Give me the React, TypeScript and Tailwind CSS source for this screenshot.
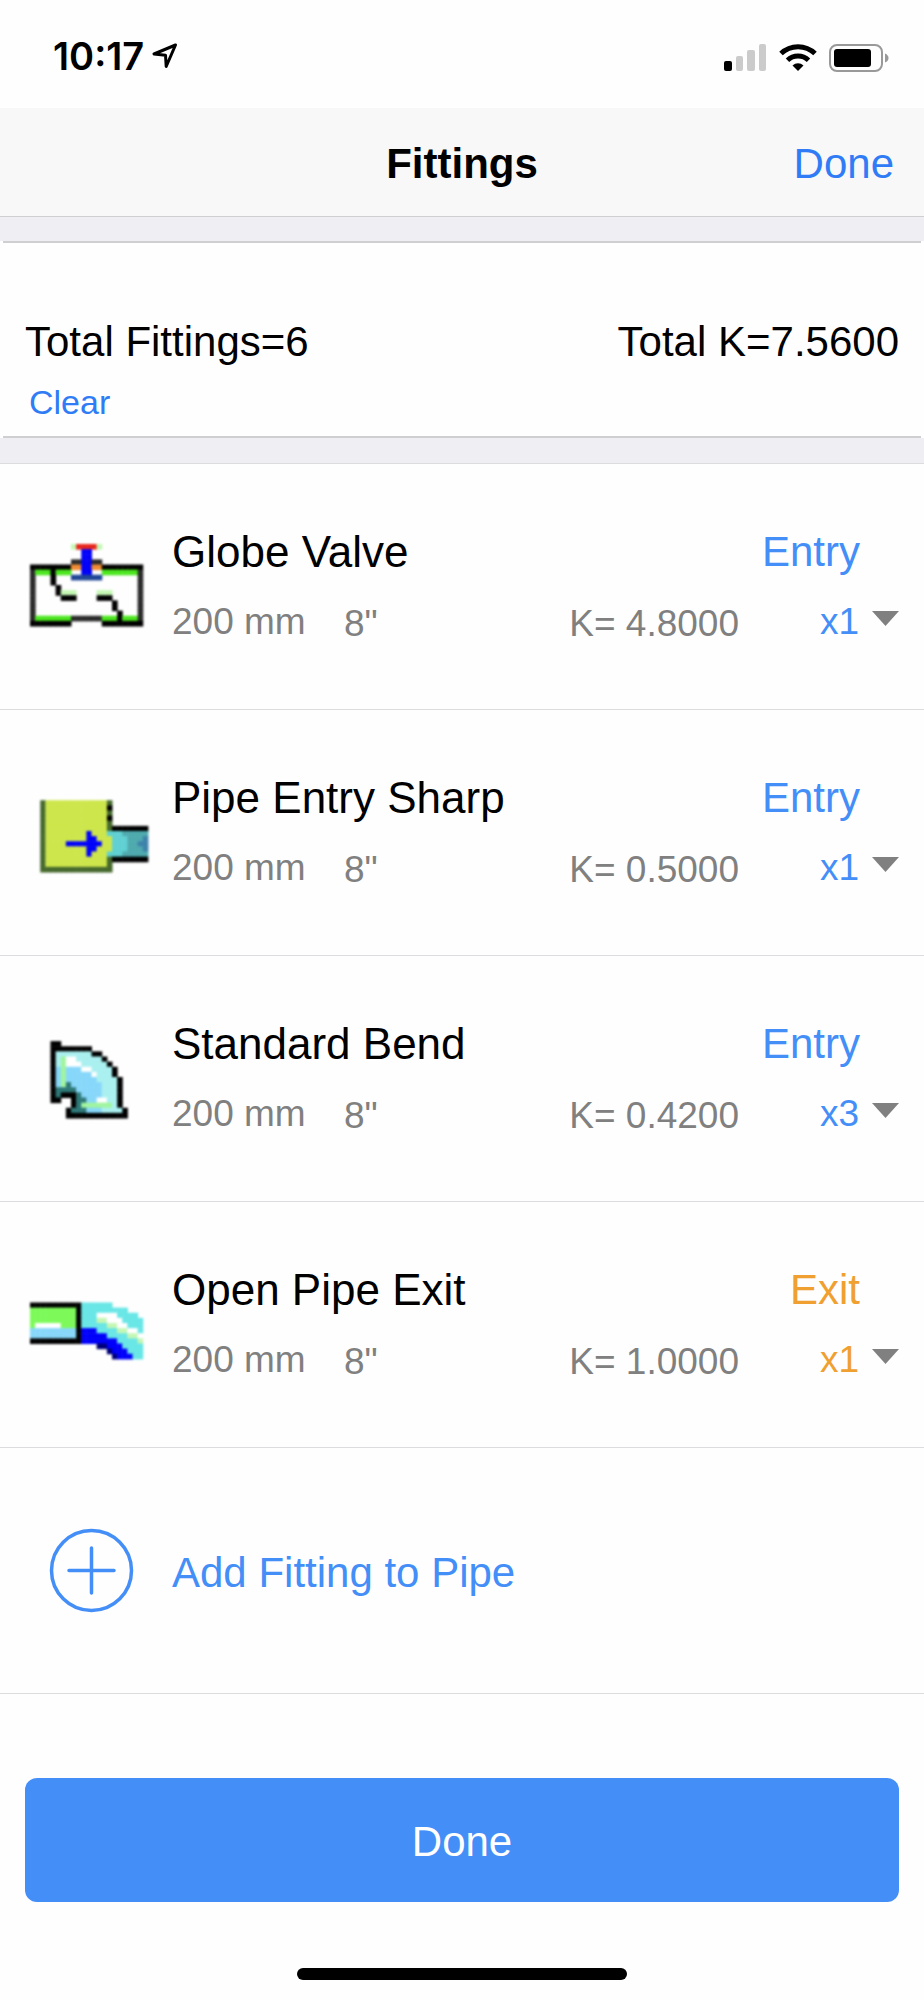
import { FC, useState } from "react";

type Fitting = {
  id: string;
  name: string;
  k: string;
  count: number;
  kind: "Entry" | "Exit";
  bitmap: string[];
};

// one character per pixel, "." is left empty
const palette: Record<string, string> = {
  K: "#000000",
  D: "#2b2b2b",
  R: "#e8251b",
  B: "#0000fa",
  N: "#000078",
  V: "#1f4596",
  O: "#f08c32",
  G: "#4be61e",
  g: "#c4f7b4",
  F: "#7dfa5a",
  f: "#a0f5a0",
  L: "#cde64b",
  M: "#46692d",
  C: "#5fd0d2",
  T: "#4eaaae",
  U: "#3c82aa",
  A: "#aaf0f0",
  S: "#87d7fa",
  E: "#2d7878",
  Q: "#69e6e6",
  W: "#ffffff",
};

const globeValve = [
  "........gRRRRg..........",
  "..........BB............",
  "..........BB............",
  "........DDBBDD..........",
  "KKKKKKKKOOBBOOKKKKKKKK..",
  "DGGGKGGG..BB..GGGGGGGD..",
  "D...K...VVVVVV.......D..",
  "D...K................D..",
  "D....K...............D..",
  "D....Kggg....ggg.....D..",
  "D.....KKK....KKK.....D..",
  "D...............K....D..",
  "D...............K....D..",
  "D................K...D..",
  "DGGGGGGGDDDDDDGGGKGGGD..",
  "KKKKKKKK......KKKKKKKK..",
];

const pipeEntry = [
  "........................",
  "........................",
  "..MLLLLLLLLLLLLM........",
  "..MLLLLLLLLLLLLK........",
  "..MLLLLLLLLLLLLM........",
  "..MLLLLLLLLLLLLK........",
  "..MLLLLLLLLLLLLM........",
  "..MLLLLLLLLLLLLMKKKKKKK.",
  "..MLLLLLLLLBLLLCCCTTTTT.",
  "..MLLLLLLLLBBLLLCCCTTTU.",
  "..MLLLLBBBBBBBLLCCCTTUU.",
  "..MLLLLLLLLBBLLLCCCTTTU.",
  "..MLLLLLLLLBLLLCCCTTTTT.",
  "..MLLLLLLLLLLLLMKKKKKKK.",
  "..MLLLLLLLLLLLLM........",
  "..MMMMMMMMMMMMMM........",
];

const standardBend = [
  "........................",
  "....KK..................",
  "....KKKKKKKK............",
  "....KAAAAAAAKK..........",
  "....KAfWWAAAAAK.........",
  "....KAfWWWAAAAAK........",
  "....KSfSSSWWAAAAK.......",
  "....KSfSSSSSWAAAK.......",
  "....KSfSSSSSSAAAAK......",
  "....KSfESSSSSSAAAK......",
  "....KEEEESSSSSAAAK......",
  "....KEKKKESSSSAAAK......",
  "....KK..KEESSWWAAK......",
  "........KEffffffAK......",
  ".......KEEESSSAAAAK.....",
  ".......KKKKKKKKKKKK.....",
];

const openPipeExit = [
  "........................",
  "........................",
  "........................",
  "........................",
  "KKKKKKKKKKQQQQQQ........",
  "FFFFFFFFFKQQQQQQQQQ.....",
  "FFFFFFFFFKQQQWWWWQQQQ...",
  "FFFFFFFFFKQQQggWWWQQQQ..",
  "FWWWWWFFFKQQQQQggWWQQQ..",
  "SSSSSSSSSKBBBQQQQggWWQ..",
  "SSSSSSSSSKBBBBBQQQQggW..",
  "KKKKKKKKKKBBBBBBBQQQQg..",
  ".............NNBBBQQQQ..",
  "...............NBBBQQQ..",
  "................NBBBQQ..",
  "........................",
];

const initialFittings: Fitting[] = [
  {
    id: "globe",
    name: "Globe Valve",
    k: "4.8000",
    count: 1,
    kind: "Entry",
    bitmap: globeValve,
  },
  {
    id: "sharp",
    name: "Pipe Entry Sharp",
    k: "0.5000",
    count: 1,
    kind: "Entry",
    bitmap: pipeEntry,
  },
  {
    id: "bend",
    name: "Standard Bend",
    k: "0.4200",
    count: 3,
    kind: "Entry",
    bitmap: standardBend,
  },
  {
    id: "exit",
    name: "Open Pipe Exit",
    k: "1.0000",
    count: 1,
    kind: "Exit",
    bitmap: openPipeExit,
  },
];

function Bitmap({ rows }: { rows: string[] }) {
  return (
    <svg
      viewBox="0 0 24 16"
      className="h-[82px] w-[123px] overflow-visible blur-[1px]"
      aria-hidden="true"
    >
      {rows.map((row, y) =>
        row
          .split("")
          .map((c, x) =>
            c === "." ? null : (
              <rect
                key={`${x}-${y}`}
                x={x}
                y={y}
                width={1.1}
                height={1.1}
                fill={palette[c]}
              />
            )
          )
      )}
    </svg>
  );
}

function StatusBar() {
  return (
    <div className="flex h-[108px] items-center justify-between pl-[53px] pr-[34px] pt-1">
      <div className="flex items-center gap-2">
        <span className="font-['Inter',sans-serif] text-[38px] leading-10 font-semibold">
          10:17
        </span>
        <svg width="26" height="26" viewBox="0 0 26 26" aria-hidden="true">
          <path
            d="M23.5 2 L2 11 L13.5 12.2 L14.2 23.5 Z"
            fill="none"
            stroke="#000"
            strokeWidth="3"
            strokeLinejoin="round"
          />
        </svg>
      </div>
      <div className="flex items-center gap-3 pt-1">
        <svg width="43" height="28" viewBox="0 0 43 28" aria-hidden="true">
          <rect x="0" y="17" width="8" height="10" rx="2" fill="#000" />
          <rect x="12" y="12" width="7" height="15" rx="2" fill="#cbcbcb" />
          <rect x="23" y="6" width="8" height="21" rx="2" fill="#cbcbcb" />
          <rect x="35" y="0" width="7" height="27" rx="2" fill="#cbcbcb" />
        </svg>
        <svg width="38" height="28" viewBox="0 0 38 28" aria-hidden="true">
          <path
            d="M2 9.5 A24.5 24.5 0 0 1 36 9.5"
            fill="none"
            stroke="#000"
            strokeWidth="5"
          />
          <path
            d="M8.5 16.2 A15.3 15.3 0 0 1 29.5 16.2"
            fill="none"
            stroke="#000"
            strokeWidth="5"
          />
          <path d="M13.5 21.5 A8 8 0 0 1 24.5 21.5 L19 27 Z" fill="#000" />
        </svg>
        <svg width="61" height="28" viewBox="0 0 61 28" aria-hidden="true">
          <rect
            x="1"
            y="1"
            width="52"
            height="26"
            rx="7"
            fill="none"
            stroke="#999"
            strokeWidth="2"
          />
          <rect x="5" y="5" width="37" height="18" rx="3" fill="#000" />
          <path d="M56 9.5 Q59.5 11 59.5 14 Q59.5 17 56 18.5 Z" fill="#999" />
        </svg>
      </div>
    </div>
  );
}

function FittingRow({
  fitting,
  onCount,
}: {
  fitting: Fitting;
  onCount: (count: number) => void;
}) {
  const color = fitting.kind === "Exit" ? "text-[#f0a030]" : "text-[#448ef8]";

  return (
    <li className="flex border-b border-[#dcdcde] pt-16 pb-[63px]">
      <div className="w-[172px] shrink-0 pl-[30px] pt-4">
        <Bitmap rows={fitting.bitmap} />
      </div>
      <div className="flex flex-1 flex-col gap-6">
        <div className="flex justify-between pr-16 leading-[48px]">
          <h2 className="text-[44px]">{fitting.name}</h2>
          <button type="button" className={`text-[42px] ${color}`}>
            {fitting.kind}
          </button>
        </div>
        <div className="flex pr-[25px] text-[37px] leading-[44px] text-[#808080]">
          <span className="w-[172px]">200 mm</span>
          <span className="pt-0.5">8"</span>
          <span className="ml-auto pt-0.5">K= {fitting.k}</span>
          <label className="relative ml-12 flex w-[112px]">
            <select
              aria-label={`${fitting.name} quantity`}
              value={fitting.count}
              onChange={(e) => onCount(Number(e.target.value))}
              className={`h-[44px] w-full appearance-none bg-transparent pr-10 [text-align-last:right] ${color}`}
            >
              {[1, 2, 3, 4, 5, 6].map((n) => (
                <option key={n} value={n}>
                  x{n}
                </option>
              ))}
            </select>
            <svg
              width="27"
              height="15"
              viewBox="0 0 27 15"
              className="pointer-events-none absolute right-0 top-[11px]"
              aria-hidden="true"
            >
              <path d="M0 0 H27 L13.5 15 Z" fill="#808080" />
            </svg>
          </label>
        </div>
      </div>
    </li>
  );
}

const App: FC = () => {
  const [fittings, setFittings] = useState(initialFittings);

  const total = fittings.reduce((sum, f) => sum + f.count, 0);
  const totalK = fittings.reduce((sum, f) => sum + f.count * Number(f.k), 0);

  const setCount = (id: string, count: number) =>
    setFittings(fittings.map((f) => (f.id === id ? { ...f, count } : f)));

  return (
    <div className="flex min-h-screen flex-col bg-[#fefefe] font-['Liberation_Sans',Arial,sans-serif] text-black">
      <StatusBar />
      <header className="grid h-[109px] grid-cols-[1fr_auto_1fr] items-center border-b border-[#cfcfd2] bg-[#f8f8f8] px-[30px] pt-1 text-[42px] leading-[48px]">
        <h1 className="col-start-2 font-bold">Fittings</h1>
        <button type="button" className="justify-self-end text-[#2f7cf6]">
          Done
        </button>
      </header>

      <section className="bg-[#efeef3] pt-6 pb-[25px]">
        <div className="bg-[#fefefe] px-[3px]">
          <div className="border-y-2 border-[#cfcfd2] px-[22px] pt-[75px] pb-3.5">
            <div className="flex justify-between text-[42px] leading-[48px]">
              <p>Total Fittings={total}</p>
              <p>Total K={totalK.toFixed(4)}</p>
            </div>
            <button
              type="button"
              onClick={() => setFittings([])}
              className="mt-4 ml-1 block text-[34px] leading-10 text-[#2f7cf6]"
            >
              Clear
            </button>
          </div>
        </div>
      </section>

      <main className="border-t border-[#dcdcde]">
        <ul>
          {fittings.map((f) => (
            <FittingRow
              key={f.id}
              fitting={f}
              onCount={(count) => setCount(f.id, count)}
            />
          ))}
        </ul>
        <button
          type="button"
          className="flex h-[246px] w-full items-center border-b border-[#dcdcde] text-left text-[42px] leading-[48px] text-[#448ef8]"
        >
          <span className="w-[172px] pl-[49px]">
            <svg width="85" height="85" viewBox="0 0 85 85" aria-hidden="true">
              <g fill="none" stroke="#448ef8" strokeWidth="3.5">
                <circle cx="42.5" cy="42.5" r="40" />
                <path d="M42.5 20 V65 M20 42.5 H65" strokeLinecap="round" />
              </g>
            </svg>
          </span>
          <span className="pt-1">Add Fitting to Pipe</span>
        </button>
      </main>

      <footer className="mt-auto flex flex-col items-center px-[25px] pb-5">
        <button
          type="button"
          className="w-full rounded-xl bg-[#448ef8] pt-10 pb-9 text-[42px] leading-[48px] text-white"
        >
          Done
        </button>
        <div className="mt-[66px] h-3 w-[330px] rounded-full bg-black" />
      </footer>
    </div>
  );
};

export default App;
